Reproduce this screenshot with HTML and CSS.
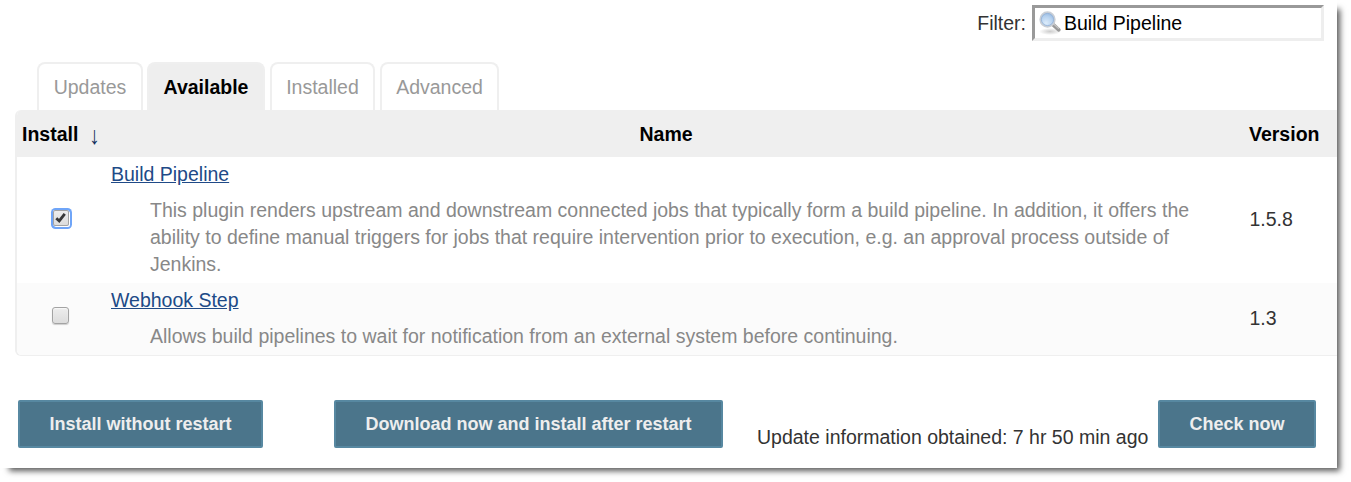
FILE: index.html
```
<!DOCTYPE html>
<html lang="en">
<head>
<meta charset="utf-8">
<title>Update Center</title>
<link rel="stylesheet" href="styles.css">
</head>
<body>
<main class="panel">
  <div class="filter">
    <label class="filter-label" for="filter-box">Filter:</label>
    <div class="filter-field">
      <svg class="filter-icon" viewBox="0 0 24 24">
        <defs>
          <radialGradient id="lens" cx=".4" cy=".75" r=".8"><stop offset="0" stop-color="#dcecfb"/><stop offset=".6" stop-color="#b4d0ee"/><stop offset="1" stop-color="#8fb2dc"/></radialGradient>
          <radialGradient id="shade"><stop offset="0" stop-color="#ccc"/><stop offset="1" stop-color="#ccc" stop-opacity="0"/></radialGradient>
        </defs>
        <ellipse cx="11" cy="20.5" rx="11" ry="3.5" fill="url(#shade)"/>
        <path d="M14 13.5 L19.8 18.8" stroke="#999" stroke-width="3.8" stroke-linecap="round"/>
        <path d="M14.5 12.8 L19.5 17.3" stroke="#c4c4c4" stroke-width="1.3" stroke-linecap="round"/>
        <circle cx="8.5" cy="8.5" r="7.2" fill="url(#lens)" stroke="#c9ced5" stroke-width="1.9"/>
        <circle cx="8.5" cy="8.5" r="6.1" fill="none" stroke="#8fb0d8" stroke-width=".8"/>
      </svg>
      <input class="filter-input" id="filter-box" type="text" value="Build Pipeline">
    </div>
  </div>

  <nav class="tabs">
    <a class="tab tab-updates">Updates</a>
    <a class="tab tab-available active">Available</a>
    <a class="tab tab-installed">Installed</a>
    <a class="tab tab-advanced">Advanced</a>
  </nav>

  <section class="plugins">
    <div class="row head">
      <div class="install-head">Install <span class="arrow">↓</span></div>
      <div class="name-head">Name</div>
      <div class="version">Version</div>
    </div>
    <div class="row first">
      <div class="check">
        <span class="box focused"><svg class="tick" viewBox="0 0 16 16"><path d="M2.6 8.2 L6 11.4 L12.3 3.2" fill="none" stroke="#383838" stroke-width="3.2"/></svg></span>
      </div>
      <div class="info">
        <a class="name" href="#">Build Pipeline</a>
        <p class="desc">This plugin renders upstream and downstream connected jobs that typically form a build pipeline. In addition, it offers the<br>ability to define manual triggers for jobs that require intervention prior to execution, e.g. an approval process outside of<br>Jenkins.</p>
      </div>
      <div class="version">1.5.8</div>
    </div>
    <div class="row second">
      <div class="check"><span class="box"></span></div>
      <div class="info">
        <a class="name" href="#">Webhook Step</a>
        <p class="desc">Allows build pipelines to wait for notification from an external system before continuing.</p>
      </div>
      <div class="version">1.3</div>
    </div>
  </section>

  <div class="actions">
    <button class="btn install" type="button">Install without restart</button>
    <button class="btn download" type="button">Download now and install after restart</button>
    <span class="status">Update information obtained: 7 hr 50 min ago</span>
    <button class="btn check-now" type="button">Check now</button>
  </div>
</main>
</body>
</html>
```

FILE: styles.css
```
* { box-sizing: border-box; }

body {
  margin: 0;
  height: 482px;
  overflow: hidden;
  background: #fff;
  color: #333;
  font: 19.5px/27px "Liberation Sans", Arial, sans-serif;
}

.panel {
  width: 1337px;
  height: 468px;
  padding-top: 5px;
  background: #fff;
  box-shadow: 6px 6px 6px -3px rgba(0, 0, 0, .65);
}

.filter {
  display: flex;
  justify-content: flex-end;
  align-items: center;
  gap: 6px;
  height: 36px;
  padding-right: 13px;
}

.filter-field {
  display: flex;
  align-items: center;
  width: 292px;
  height: 36px;
  padding-left: 4px;
  border: 3px solid;
  border-color: #999 #eee #eee #999;
  background: #fff;
}

.filter-icon { width: 24px; height: 24px; }

.filter-input {
  flex: 1;
  min-width: 0;
  padding: 0 0 0 1px;
  border: 0;
  outline: 0;
  background: none;
  color: #000;
  font: inherit;
}

.tabs {
  display: flex;
  gap: 4px;
  height: 48px;
  margin: 21px 0 0 37px;
}

.tab {
  height: 48px;
  padding-top: 10px;
  border: 2px solid #efefef;
  border-bottom: 0;
  border-radius: 8px 8px 0 0;
  color: #999;
  text-align: center;
}

.tab-updates { width: 106px; }
.tab-available { width: 118px; }
.tab-installed { width: 105px; margin-left: 1px; }
.tab-advanced { width: 119px; margin-left: 1px; }

.tab.active {
  background: #eee;
  color: #000;
  font-weight: bold;
}

.plugins {
  margin-left: 15px;
  border-left: 2px solid #efefef;
  border-bottom: 1px solid #efefef;
  border-radius: 6px 0 0 6px;
  overflow: hidden;
}

.row {
  display: grid;
  grid-template-columns: 94px 1138px 88px;
  align-items: center;
}

.row.head {
  height: 47px;
  padding-top: 1px;
  background: #efefef;
  color: #000;
  font-weight: bold;
}

.row.first { height: 126px; }
.row.second { height: 72px; background: #fbfbfb; }

.install-head { display: flex; height: 27px; padding-left: 5px; gap: 10px; }
.arrow { padding-top: 1px; color: #14305c; font-weight: normal; font-size: 25px; transform: scaleX(.85); }
.name-head { padding-left: 528.5px; }
.row.first .version, .row.second .version { padding: 0 0 2px 0.5px; }

.check { padding: 0 0 7px 35px; }

.box {
  display: block;
  width: 17px;
  height: 17px;
  border: 1px solid #a3a3a3;
  border-radius: 3px;
  background: linear-gradient(#ededed, #dcdcdc);
  box-shadow: 0 1px 1px rgba(0, 0, 0, .18), inset 0 1px 1px #f8f8f8;
}

.focused {
  width: 16px;
  height: 16px;
  margin: 2px 0 0 1px;
  border-radius: 2px;
  box-shadow: 1px 1px 0 0 #fff, .5px .5px 0 2.5px #6fa5f8;
}

.tick { display: block; width: 14px; height: 14px; }

.info { align-self: start; padding-top: 4px; }
.name { display: block; width: max-content; color: #204a87; }
.desc { margin: 9px 0 0 39px; color: #888; white-space: nowrap; }

.actions {
  display: flex;
  align-items: flex-start;
  margin: 44px 0 0 18px;
}

.btn {
  height: 48px;
  padding: 0;
  border: 2px solid #5788a1;
  border-radius: 2px;
  background: #4b758b;
  color: #eee;
  font: bold 18px "Liberation Sans", Arial, sans-serif;
}

.install { width: 245px; }
.download { width: 389px; margin-left: 71px; }
.check-now { width: 158px; margin-left: 10px; }
.status { width: 391px; margin: 24px 0 0 34px; white-space: nowrap; }
```
